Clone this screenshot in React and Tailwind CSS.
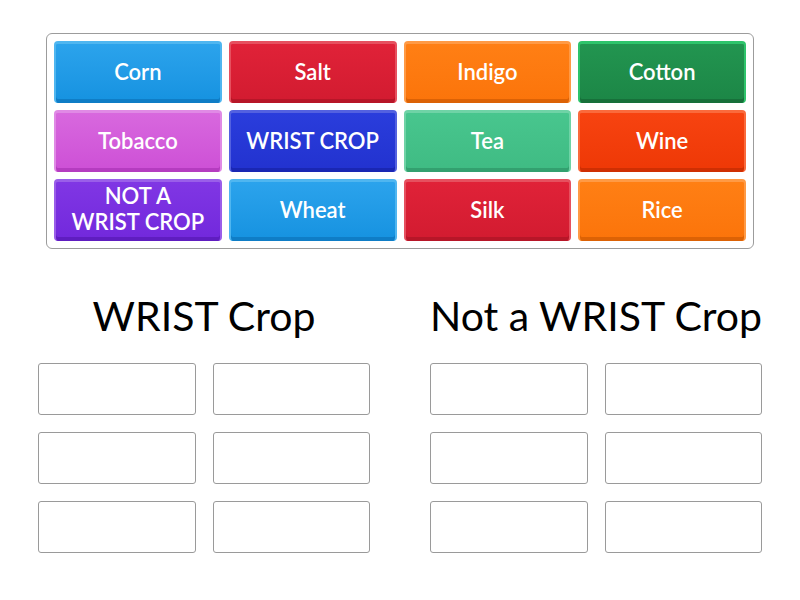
import React from "react";

const tiles = [
  { t: "Corn", c: "bg-gradient-to-b from-[#2ba3ec] to-[#1592e0]", b: "border-[#4fb6f0]", d: "shadow-[inset_0_-4px_0_#0f7dc6]" },
  { t: "Salt", c: "bg-gradient-to-b from-[#e02238] to-[#d21b30]", b: "border-[#e6505f]", d: "shadow-[inset_0_-4px_0_#b71628]" },
  { t: "Indigo", c: "bg-gradient-to-b from-[#ff7f14] to-[#fb740a]", b: "border-[#ff9a45]", d: "shadow-[inset_0_-4px_0_#dc6205]" },
  { t: "Cotton", c: "bg-gradient-to-b from-[#229550] to-[#1c8646]", b: "border-[#2ec46b]", d: "shadow-[inset_0_-4px_0_#17703a]" },
  { t: "Tobacco", c: "bg-gradient-to-b from-[#d868de] to-[#cd4fd6]", b: "border-[#e08ae5]", d: "shadow-[inset_0_-4px_0_#b53cc0]" },
  { t: "WRIST CROP", c: "bg-gradient-to-b from-[#2a3ddc] to-[#2232cf]", b: "border-[#5361e0]", d: "shadow-[inset_0_-4px_0_#1a27b3]" },
  { t: "Tea", c: "bg-gradient-to-b from-[#48c68e] to-[#3fbb83]", b: "border-[#6fd3a6]", d: "shadow-[inset_0_-4px_0_#33a06f]" },
  { t: "Wine", c: "bg-gradient-to-b from-[#f74310] to-[#ee3806]", b: "border-[#fa6a3c]", d: "shadow-[inset_0_-4px_0_#cf2f03]" },
  { t: "NOT A WRIST CROP", two: true, c: "bg-gradient-to-b from-[#8036e4] to-[#7228dc]", b: "border-[#9a5ee9]", d: "shadow-[inset_0_-4px_0_#5f1dc0]" },
  { t: "Wheat", c: "bg-gradient-to-b from-[#2ba3ec] to-[#1592e0]", b: "border-[#4fb6f0]", d: "shadow-[inset_0_-4px_0_#0f7dc6]" },
  { t: "Silk", c: "bg-gradient-to-b from-[#e02238] to-[#d21b30]", b: "border-[#e6505f]", d: "shadow-[inset_0_-4px_0_#b71628]" },
  { t: "Rice", c: "bg-gradient-to-b from-[#ff7f14] to-[#fb740a]", b: "border-[#ff9a45]", d: "shadow-[inset_0_-4px_0_#dc6205]" },
];

function Tile({ tile }) {
  return (
    <div
      className={`h-[62px] rounded-[4px] border-t-[3px] border-x-[2px] border-b-0 ${tile.b} ${tile.c} ${tile.d} flex items-center justify-center text-white text-[22px] font-semibold text-center leading-[26px] pb-[3px] overflow-hidden`}
    >
      {tile.two ? (
        <span className="-mt-[3px]">
          NOT A<br />WRIST CROP
        </span>
      ) : (
        <span>{tile.t}</span>
      )}
    </div>
  );
}

function Group({ title }) {
  return (
    <div className="w-[332px] flex flex-col items-center">
      <div className="text-[41px] leading-[48px] text-black font-normal whitespace-nowrap">{title}</div>
      <div className="mt-[23px] w-full grid grid-cols-2 gap-x-[17px] gap-y-[17px]">
        {Array.from({ length: 6 }).map((_, i) => (
          <div key={i} className="h-[52px] rounded-[3px] border border-[#9a9a9a] bg-white" />
        ))}
      </div>
    </div>
  );
}

export default function App() {
  return (
    <div
      className="w-[800px] h-[600px] bg-white pt-[33px]"
      style={{ fontFamily: "Lato, 'Noto Sans', sans-serif" }}
    >
      <div className="mx-auto w-[708px] border border-[#9c9c9c] rounded-[6px] px-[7px] py-[7px]">
        <div className="grid grid-cols-4 gap-[7px]">
          {tiles.map((t, i) => (
            <Tile key={i} tile={t} />
          ))}
        </div>
      </div>
      <div className="mt-[43px] flex justify-center gap-[60px]">
        <Group title="WRIST Crop" />
        <Group title="Not a WRIST Crop" />
      </div>
    </div>
  );
}
